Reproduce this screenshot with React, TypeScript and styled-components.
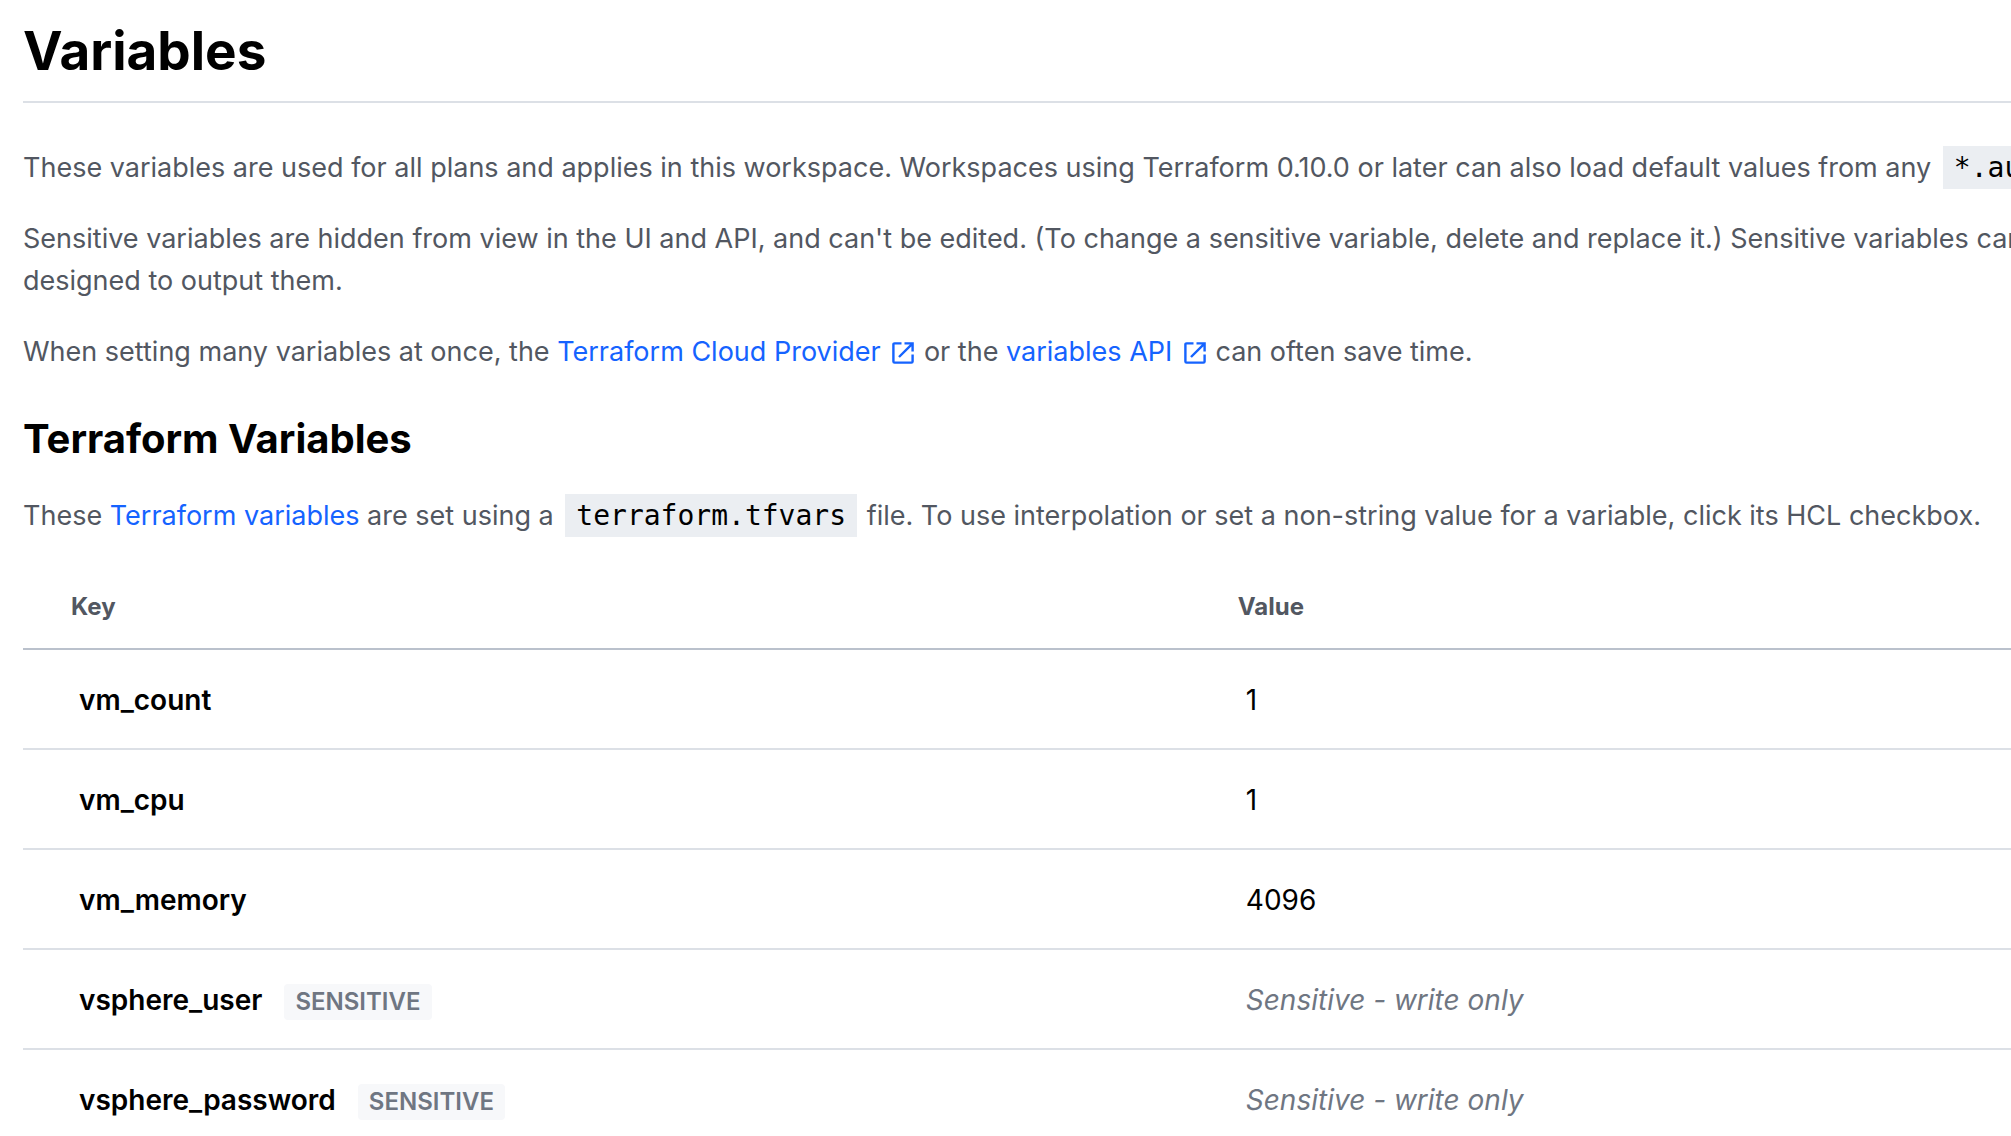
import React from "react";
import styled, { createGlobalStyle } from "styled-components";

const GlobalStyle = createGlobalStyle`
  * {
    box-sizing: border-box;
  }

  body {
    margin: 0;
    background: #ffffff;
    color: #000000;
    font-family: Inter, "Liberation Sans", sans-serif;
    font-size: 28px;
    line-height: 42px;
  }
`;

const Page = styled.main`
  padding: 16px 0 0 23px;
  overflow: hidden;
`;

const PageTitle = styled.h1`
  margin: 0 0 44px;
  padding-bottom: 15px;
  border-bottom: 2px solid #dce0e6;
  font-size: 53px;
  font-weight: 700;
  line-height: 70px;
`;

const SectionTitle = styled.h2`
  margin: 38px 0 28px;
  font-size: 40px;
  font-weight: 700;
  line-height: 56px;
`;

const Text = styled.p`
  margin: 0 0 29px;
  color: #525761;
  font-size: 27px;
  white-space: nowrap;
`;

const Link = styled.a`
  color: #1563ff;
  text-decoration: none;
`;

const Code = styled.code`
  margin: 0 2px 0 4px;
  padding: 5px 11px;
  background: #ebeef2;
  color: #000000;
  font-family: "DejaVu Sans Mono", monospace;
  font-size: 28px;
`;

const LinkIcon = styled.svg`
  width: 22px;
  height: 22px;
  margin: 0 2px 0 4px;
  vertical-align: -3px;
`;

const Table = styled.table`
  width: 100%;
  border-collapse: collapse;
  table-layout: fixed;
`;

const HeadCell = styled.th`
  height: 83px;
  padding: 0 22px;
  border-bottom: 2px solid #bac1cc;
  color: #525761;
  font-size: 24px;
  font-weight: 700;
  line-height: 36px;
  text-align: left;

  &:first-child {
    width: 60%;
    padding-left: 48px;
  }
`;

const Cell = styled.td`
  height: 100px;
  padding: 2px 30px 0;
  border-bottom: 2px solid #dce0e6;

  &:first-child {
    padding-left: 56px;
  }
`;

const KeyLine = styled.div`
  display: flex;
  align-items: baseline;
  gap: 22px;
`;

const KeyName = styled.span`
  font-weight: 600;
`;

const Badge = styled.span`
  padding: 0 11px;
  border-radius: 4px;
  background: #f7f8fa;
  color: #6f7682;
  font-size: 24px;
  font-weight: 600;
  line-height: 36px;
`;

const WriteOnly = styled.em`
  color: #6f7682;
`;

interface Variable {
  name: string;
  value?: string;
}

const variables: Variable[] = [
  { name: "vm_count", value: "1" },
  { name: "vm_cpu", value: "1" },
  { name: "vm_memory", value: "4096" },
  { name: "vsphere_user" },
  { name: "vsphere_password" },
];

function ExternalIcon() {
  return (
    <LinkIcon viewBox="0 0 22 22" fill="none" stroke="currentColor" strokeWidth="2.4" aria-hidden="true">
      <path d="M9.5 1.4H2.6Q1.4 1.4 1.4 2.6V19.4Q1.4 20.6 2.6 20.6H19.4Q20.6 20.6 20.6 19.4V12.5" />
      <path d="M12.5 1.4H20.6V9.5M20.2 1.8L7 15" />
    </LinkIcon>
  );
}

function VariableRow({ name, value }: Variable) {
  const sensitive = value === undefined;
  return (
    <tr>
      <Cell>
        <KeyLine>
          <KeyName>{name}</KeyName>
          {sensitive && <Badge>SENSITIVE</Badge>}
        </KeyLine>
      </Cell>
      <Cell>{sensitive ? <WriteOnly>Sensitive - write only</WriteOnly> : value}</Cell>
    </tr>
  );
}

export default function App() {
  return (
    <>
      <GlobalStyle />
      <Page>
        <PageTitle>Variables</PageTitle>
        <Text>
          These variables are used for all plans and applies in this workspace. Workspaces using Terraform 0.10.0 or
          later can also load default values from any <Code>*.auto.tfvars</Code>
        </Text>
        <Text>
          Sensitive variables are hidden from view in the UI and API, and can't be edited. (To change a sensitive
          variable, delete and replace it.) Sensitive variables can
          <br />
          designed to output them.
        </Text>
        <Text>
          When setting many variables at once, the{" "}
          <Link href="#provider">
            Terraform Cloud Provider <ExternalIcon />
          </Link>{" "}
          or the{" "}
          <Link href="#api">
            variables API <ExternalIcon />
          </Link>{" "}
          can often save time.
        </Text>
        <SectionTitle>Terraform Variables</SectionTitle>
        <Text>
          These <Link href="#variables">Terraform variables</Link> are set using a <Code>terraform.tfvars</Code> file.
          To use interpolation or set a non-string value for a variable, click its HCL checkbox.
        </Text>
        <Table>
          <thead>
            <tr>
              <HeadCell scope="col">Key</HeadCell>
              <HeadCell scope="col">Value</HeadCell>
            </tr>
          </thead>
          <tbody>
            {variables.map((variable) => (
              <VariableRow key={variable.name} {...variable} />
            ))}
          </tbody>
        </Table>
      </Page>
    </>
  );
}
